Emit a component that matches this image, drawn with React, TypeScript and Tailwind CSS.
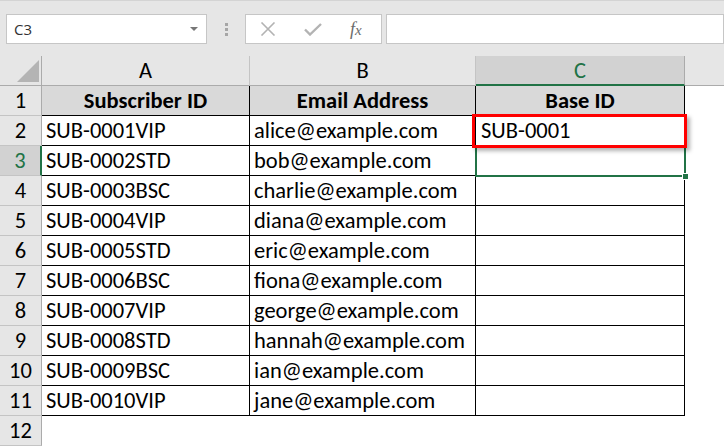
import React from "react";

const rows = [
  ["SUB-0001VIP", "alice@example.com", "SUB-0001"],
  ["SUB-0002STD", "bob@example.com", ""],
  ["SUB-0003BSC", "charlie@example.com", ""],
  ["SUB-0004VIP", "diana@example.com", ""],
  ["SUB-0005STD", "eric@example.com", ""],
  ["SUB-0006BSC", "fiona@example.com", ""],
  ["SUB-0007VIP", "george@example.com", ""],
  ["SUB-0008STD", "hannah@example.com", ""],
  ["SUB-0009BSC", "ian@example.com", ""],
  ["SUB-0010VIP", "jane@example.com", ""],
];

const cellFont = { fontFamily: "Carlito, Lato, 'Liberation Sans', sans-serif" };

function RowHead({ n, active }: { n: number; active?: boolean }) {
  return (
    <div
      className={
        active
          ? "h-[30px] flex items-center justify-center pt-[2px] bg-[#d2d2d2] text-[#217346] border-b border-[#c4c4c4] border-r-2 border-r-[#217346]"
          : "h-[30px] flex items-center justify-center pt-[2px] bg-[#e6e6e6] text-black border-b border-[#c4c4c4] border-r border-r-[#ababab]"
      }
    >
      {n}
    </div>
  );
}

export default function App() {
  return (
    <div
      className="relative w-[724px] h-[446px] overflow-hidden bg-white text-[22.5px] text-black leading-none"
      style={cellFont}
    >
      {/* formula bar */}
      <div className="h-[56px] bg-[#e6e6e6] border-t border-[#d4d4d4] flex items-start pt-[13px] pl-[6px]">
        <div
          className="w-[201px] h-[30px] bg-white border border-[#c6c6c6] flex items-center justify-between pl-[7px] pr-[8px] text-[15px] text-[#333]"
          style={{ fontFamily: "'Open Sans', 'Liberation Sans', sans-serif" }}
        >
          <span>C3</span>
          <svg width="8" height="5" viewBox="0 0 8 5">
            <path d="M0 0h8L4 4z" fill="#777" />
          </svg>
        </div>
        <div className="w-[38px] h-[30px] flex flex-col items-center justify-center gap-[2px]">
          <div className="w-[3px] h-[3px] bg-[#a6a6a6]" />
          <div className="w-[3px] h-[3px] bg-[#a6a6a6]" />
          <div className="w-[3px] h-[3px] bg-[#a6a6a6]" />
        </div>
        <div className="w-[137px] h-[30px] bg-white border border-[#c6c6c6] flex items-center pl-[14px] gap-[28px]">
          <svg width="16" height="14" viewBox="0 0 16 14">
            <path d="M1.5 0.5l13 13M14.5 0.5l-13 13" stroke="#b3b3b3" strokeWidth="1.6" fill="none" />
          </svg>
          <svg width="18" height="13" viewBox="0 0 18 13">
            <path d="M1 6.5l5 5L17 1" stroke="#b3b3b3" strokeWidth="2.4" fill="none" />
          </svg>
          <span
            className="text-[18px] italic text-[#6b6b6b] leading-none"
            style={{ fontFamily: "'Liberation Serif', 'DejaVu Serif', serif" }}
          >
            f<span className="text-[15px]">x</span>
          </span>
        </div>
        <div className="ml-[4px] flex-1 h-[30px] bg-white border border-[#c6c6c6]" />
      </div>

      {/* column headers */}
      <div className="grid grid-cols-[42px_208px_226px_209px_1fr] h-[30px] bg-[#e6e6e6]">
        <div className="relative border-r border-[#ababab] border-b border-b-[#ababab]">
          <svg className="absolute left-[17px] top-[4px]" width="22" height="22" viewBox="0 0 22 22">
            <path d="M22 0V22H0z" fill="#b4b4b4" />
          </svg>
        </div>
        <div className="flex items-center justify-center pt-[2px] border-r border-[#c4c4c4] border-b border-b-[#ababab]">A</div>
        <div className="flex items-center justify-center pt-[2px] border-r border-[#c4c4c4] border-b border-b-[#ababab]">B</div>
        <div className="flex items-center justify-center pt-[2px] bg-[#d2d2d2] text-[#217346] border-r border-[#ababab] border-b-2 border-b-[#217346]">
          C
        </div>
        <div className="border-b border-[#ababab]" />
      </div>

      {/* sheet body */}
      <div className="grid grid-cols-[42px_208px_226px_209px_1fr]">
        <RowHead n={1} />
        <div className="h-[30px] bg-[#d9d9d9] font-bold flex items-center justify-center pt-[2px] border-r border-b border-black">
          Subscriber ID
        </div>
        <div className="h-[30px] bg-[#d9d9d9] font-bold flex items-center justify-center pt-[2px] border-r border-b border-black">
          Email Address
        </div>
        <div className="h-[30px] bg-[#d9d9d9] font-bold flex items-center justify-center pt-[2px] border-r border-b border-black">
          Base ID
        </div>
        <div />
        {rows.map((r, i) => (
          <React.Fragment key={r[0]}>
            <RowHead n={i + 2} active={i === 1} />
            <div className="h-[30px] flex items-center pt-[2px] pl-[4px] border-r border-b border-black">{r[0]}</div>
            <div className="h-[30px] flex items-center pt-[2px] pl-[4px] border-r border-b border-black">{r[1]}</div>
            <div className="h-[30px] flex items-center pt-[2px] pl-[5px] border-r border-b border-black">{r[2]}</div>
            <div />
          </React.Fragment>
        ))}
        <RowHead n={12} />
        <div className="h-[30px]" />
        <div />
        <div />
        <div />
      </div>

      {/* selection and highlight overlays */}
      <div className="absolute left-[475px] top-[145px] w-[211px] h-[32px] border-2 border-[#217346]" />
      <div className="absolute left-[682px] top-[173px] w-[7px] h-[7px] bg-[#217346] border border-white" />
      <div className="absolute left-[472px] top-[114px] w-[215px] h-[34px] border-[3px] border-[#ff0000] shadow-[3px_3px_4px_rgba(0,0,0,0.3)]" />
    </div>
  );
}
